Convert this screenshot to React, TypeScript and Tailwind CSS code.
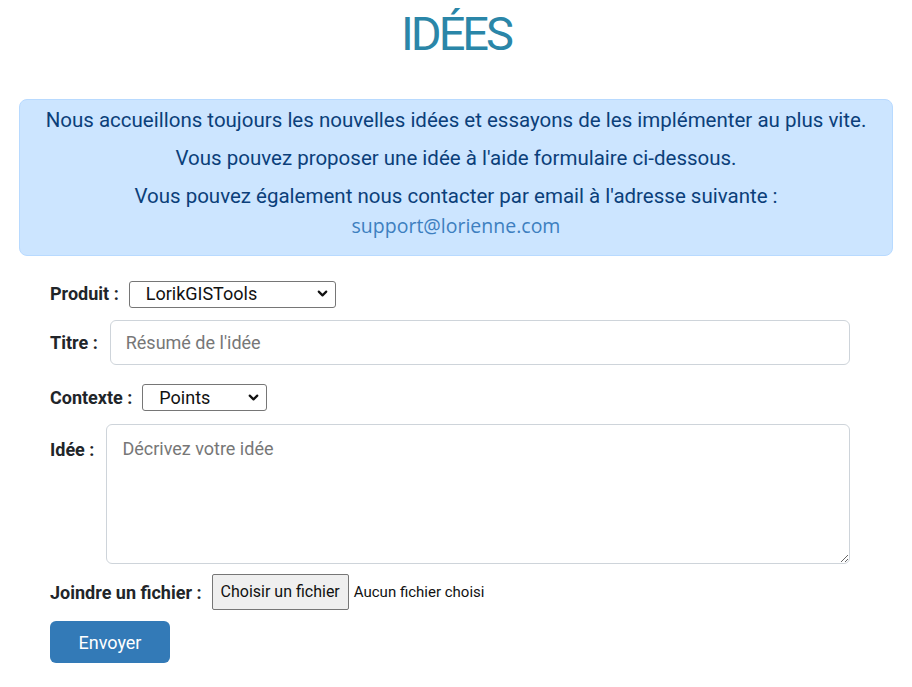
import React from "react";
import { ChevronDown } from "lucide-react";

const font = { fontFamily: "Roboto, 'Noto Sans', sans-serif" };

function FakeSelect({ value, width }: { value: string; width: string }) {
  return (
    <div className={`relative ${width}`}>
      <select
        defaultValue={value}
        className="h-[27px] w-full appearance-none rounded-[3px] border border-[#767676] bg-white pl-[16px] text-[18px] leading-none text-[#111] outline-none"
      >
        <option>{value}</option>
      </select>
      <ChevronDown
        size={15}
        strokeWidth={3.5}
        className="pointer-events-none absolute right-[6px] top-[6px] text-[#111]"
      />
    </div>
  );
}

export default function App() {
  return (
    <div className="min-h-screen bg-white px-[19px]" style={font}>
      <h1 className="pt-[6px] text-center text-[47px] font-normal leading-[56px] tracking-[-3px] text-[#2a86a8]">
        IDÉES
      </h1>

      <div className="mt-[37px] rounded-[8px] border border-[#b8daff] bg-[#cce5ff] pb-[14px] pt-[6px] text-center text-[20.5px] text-[#0b3f7a]">
        <p className="leading-[28px]">
          Nous accueillons toujours les nouvelles idées et essayons de les implémenter au plus vite.
        </p>
        <p className="mt-[10px] leading-[28px]">
          Vous pouvez proposer une idée à l'aide formulaire ci-dessous.
        </p>
        <p className="mt-[10px] leading-[28px]">
          Vous pouvez également nous contacter par email à l'adresse suivante :
        </p>
        <a
          href="#"
          className="block text-[19.5px] leading-[31px] text-[#3d7fc0]"
          style={{ fontFamily: "'Open Sans', sans-serif" }}
        >
          support@lorienne.com
        </a>
      </div>

      <form className="pl-[31px] pr-[43px] text-[18px] text-[#212529]">
        <div className="mt-[24px] flex items-center gap-[10px]">
          <label className="font-bold">Produit :</label>
          <FakeSelect value="LorikGISTools" width="w-[207px]" />
        </div>

        <div className="mt-[12px] flex items-center gap-[12px]">
          <label className="font-bold">Titre :</label>
          <input
            placeholder="Résumé de l'idée"
            className="h-[45px] flex-1 rounded-[6px] border border-[#ced4da] bg-white px-[15px] text-[18px] text-[#212529] outline-none placeholder:text-[#777]"
          />
        </div>

        <div className="mt-[19px] flex items-center gap-[10px]">
          <label className="font-bold">Contexte :</label>
          <FakeSelect value="Points" width="w-[125px]" />
        </div>

        <div className="mt-[13px] flex items-start gap-[12px]">
          <label className="pt-[12px] font-bold">Idée :</label>
          <textarea
            placeholder="Décrivez votre idée"
            className="h-[140px] flex-1 rounded-[6px] border border-[#ced4da] bg-white px-[15px] py-[10px] text-[18px] text-[#212529] outline-none placeholder:text-[#777]"
          />
        </div>

        <div className="mt-[10px] flex items-center gap-[10px]">
          <label className="font-bold">Joindre un fichier :</label>
          <div className="flex items-center gap-[5px]">
            <button
              type="button"
              className="h-[36px] rounded-[2px] border border-[#767676] bg-[#efefef] px-[8px] text-[16px] text-[#111]"
            >
              Choisir un fichier
            </button>
            <span className="text-[15px] text-[#111]">Aucun fichier choisi</span>
          </div>
        </div>

        <button
          type="button"
          className="mt-[11px] h-[42px] w-[120px] rounded-[6px] bg-[#337ab7] text-[18px] text-white"
        >
          Envoyer
        </button>
      </form>
    </div>
  );
}
